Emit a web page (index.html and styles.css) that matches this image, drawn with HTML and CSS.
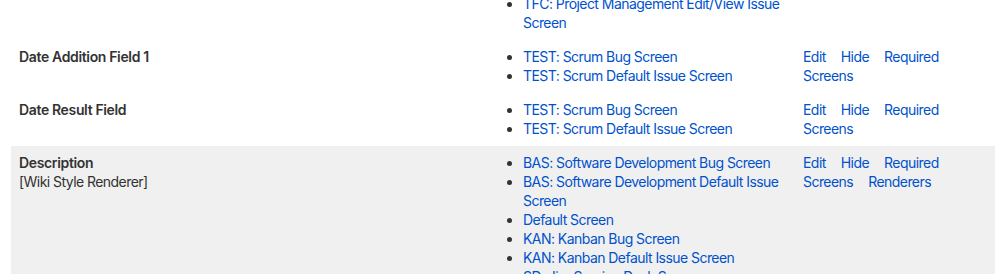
FILE: index.html
```html
<!DOCTYPE html>
<html lang="en">
<head>
    <meta charset="UTF-8">
    <title>Field Configuration</title>
    <link rel="stylesheet" href="styles.css">
</head>
<body>
    <table class="fields">
        <tbody>
            <tr>
                <td class="name"></td>
                <td class="screens">
                    <ul>
                        <li><a href="#">TFC: Project Management Edit/View Issue Screen</a></li>
                    </ul>
                </td>
                <td class="ops"></td>
            </tr>
            <tr>
                <td class="name"><b>Date Addition Field 1</b></td>
                <td class="screens">
                    <ul>
                        <li><a href="#">TEST: Scrum Bug Screen</a></li>
                        <li><a href="#">TEST: Scrum Default Issue Screen</a></li>
                    </ul>
                </td>
                <td class="ops">
                    <div class="op-list">
                        <a href="#">Edit</a>
                        <a href="#">Hide</a>
                        <a href="#">Required</a>
                        <a href="#">Screens</a>
                    </div>
                </td>
            </tr>
            <tr>
                <td class="name"><b>Date Result Field</b></td>
                <td class="screens">
                    <ul>
                        <li><a href="#">TEST: Scrum Bug Screen</a></li>
                        <li><a href="#">TEST: Scrum Default Issue Screen</a></li>
                    </ul>
                </td>
                <td class="ops">
                    <div class="op-list">
                        <a href="#">Edit</a>
                        <a href="#">Hide</a>
                        <a href="#">Required</a>
                        <a href="#">Screens</a>
                    </div>
                </td>
            </tr>
            <tr class="alt">
                <td class="name">
                    <b>Description</b>
                    <div class="renderer">[Wiki Style Renderer]</div>
                </td>
                <td class="screens">
                    <ul>
                        <li><a href="#">BAS: Software Development Bug Screen</a></li>
                        <li><a href="#">BAS: Software Development Default Issue Screen</a></li>
                        <li><a href="#">Default Screen</a></li>
                        <li><a href="#">KAN: Kanban Bug Screen</a></li>
                        <li><a href="#">KAN: Kanban Default Issue Screen</a></li>
                        <li><a href="#">SD: Jira Service Desk Screen</a></li>
                    </ul>
                </td>
                <td class="ops">
                    <div class="op-list">
                        <a href="#">Edit</a>
                        <a href="#">Hide</a>
                        <a href="#">Required</a>
                        <a href="#">Screens</a>
                        <a href="#">Renderers</a>
                    </div>
                </td>
            </tr>
        </tbody>
    </table>
</body>
</html>
```

FILE: styles.css
```css
body {
    margin: 0;
    padding: 0 4px 0 11px;
    font-family: Inter, "Noto Sans", sans-serif;
    font-size: 14px;
    line-height: 19px;
    letter-spacing: -0.55px;
    color: #333;
}
.fields {
    width: 984px;
    border-collapse: collapse;
    table-layout: fixed;
    margin-top: -13px;
}
.fields td {
    vertical-align: top;
    padding: 7px 8px 8px;
}
.fields b {
    font-weight: 600;
    letter-spacing: -0.35px;
}
.name { width: 468px; }
.screens { width: 284px; }
.alt td { background-color: #f0f0f0; }

a {
    color: #0052cc;
    text-decoration: none;
}
.screens ul {
    margin: 0;
    padding-left: 20px;
}
.screens li::marker { color: #333; }

.op-list {
    display: flex;
    flex-wrap: wrap;
    column-gap: 15px;
}
```
